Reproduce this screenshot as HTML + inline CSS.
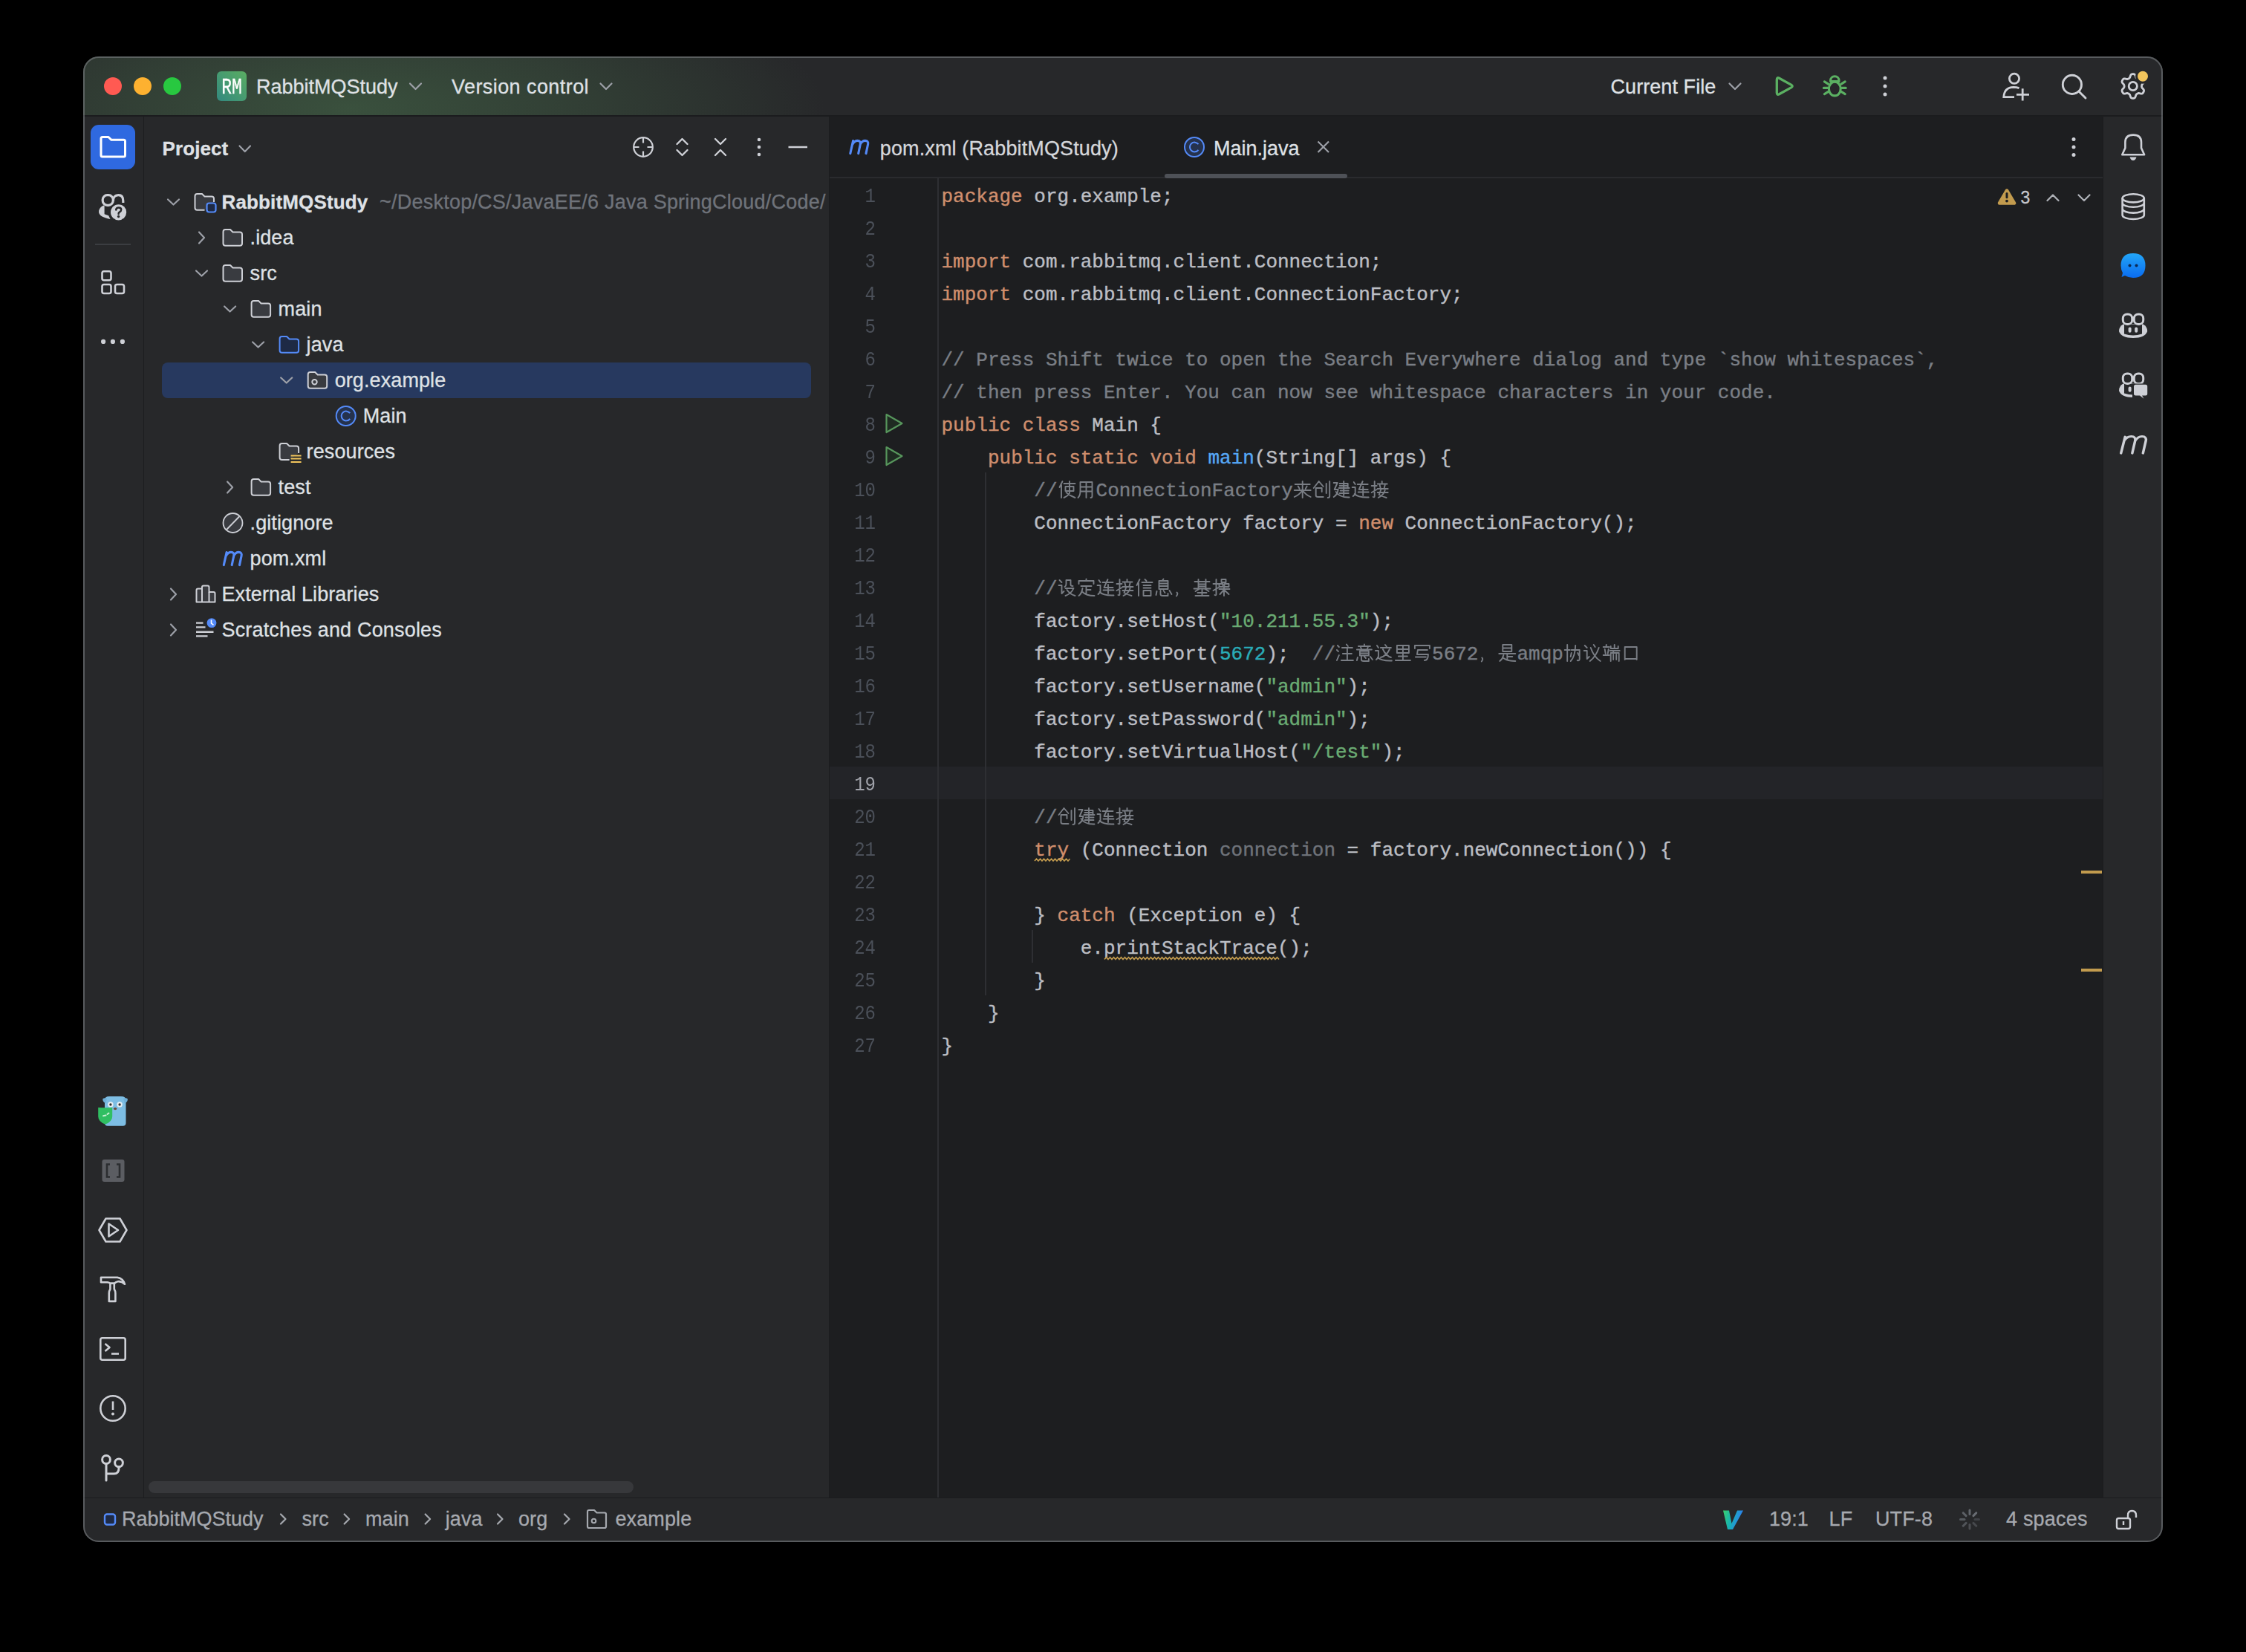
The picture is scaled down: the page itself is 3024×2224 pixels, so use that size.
<!DOCTYPE html>
<html><head><meta charset="utf-8">
<style>
html,body{margin:0;padding:0;background:#000;}
body{width:3024px;height:2224px;overflow:hidden;position:relative;font-family:"Liberation Sans",sans-serif;}
.a{position:absolute;}
.t{position:absolute;font-size:27px;line-height:26px;white-space:pre;color:#DFE1E5;-webkit-text-stroke:0.3px currentColor;}
#clip{position:absolute;left:0;top:0;width:3024px;height:2224px;clip-path:inset(76px 112px 148px 112px round 21px);background:#27282A;}
.code{position:absolute;left:1267.5px;top:242.5px;font-family:"Liberation Mono",monospace;font-size:26px;line-height:44px;white-space:pre;color:#BCBEC4;-webkit-text-stroke:0.4px currentColor;}
.ln{position:absolute;left:1080px;width:99px;text-align:right;font-family:"Liberation Mono",monospace;font-size:24px;line-height:44px;transform:scaleY(1.17);transform-origin:0 28.4px;}
.kw,.kwu{color:#CF8E6D}.str{color:#6AAB73}.num{color:#2AACB8}.cm{color:#7A7E85}.fn{color:#56A8F5}.un{color:#6F737A}
.cj{display:inline-block;width:26px;height:0;position:relative;}
svg{position:absolute;overflow:visible;}
.chev{fill:none;stroke:#9DA0A8;stroke-width:2.2;stroke-linecap:round;stroke-linejoin:round}
</style></head>
<body>
<div id="clip">
<div class="a" style="left:112px;top:76px;width:2800px;height:80px;background:#27282A;"></div>
<div class="a" style="left:112px;top:76px;width:1500px;height:80px;background:radial-gradient(ellipse 640px 190px at 360px 70px, rgba(80,128,84,0.46), rgba(80,128,84,0.25) 50%, rgba(80,128,84,0) 100%);"></div>
<div class="a" style="left:112px;top:155px;width:2800px;height:2px;background:#1B1C1E;"></div>
<div class="a" style="left:140px;top:104px;width:24px;height:24px;border-radius:50%;background:#FF5A52;"></div>
<div class="a" style="left:180px;top:104px;width:24px;height:24px;border-radius:50%;background:#FDB130;"></div>
<div class="a" style="left:220px;top:104px;width:24px;height:24px;border-radius:50%;background:#28C840;"></div>
<div class="a" style="left:292px;top:96px;width:40px;height:40px;border-radius:6px;background:linear-gradient(45deg,#33897F,#5AAD62);"></div>
<div class="a" style="left:295px;top:98px;width:34px;height:40px;font-family:'Liberation Mono',monospace;font-size:23px;line-height:40px;color:#fff;-webkit-text-stroke:0.25px #fff;text-align:center;transform:scaleY(1.26);">RM</div>
<div class="t" style="left:345.00px;top:103.94px;letter-spacing:0px;">RabbitMQStudy</div>
<div class="t" style="left:608.00px;top:103.94px;letter-spacing:0.43px;">Version control</div>
<div class="t" style="left:2168.50px;top:103.94px;letter-spacing:0.07px;">Current File</div>
<div class="a" style="left:193px;top:157px;width:1px;height:1860px;background:#1B1C1E;"></div>
<div class="a" style="left:122px;top:168px;width:60px;height:60px;border-radius:11px;background:#2F69E0;"></div>
<div class="a" style="left:128px;top:328px;width:48px;height:2px;background:#3B3D41;"></div>
<div class="t" style="left:218.50px;top:186.74px;letter-spacing:0.1px;font-size:26px;font-weight:bold;">Project</div>
<div class="a" style="left:218px;top:488px;width:874px;height:48px;border-radius:8px;background:#27395F;"></div>
<div class="t" style="left:298.50px;top:258.99px;letter-spacing:0.15px;font-size:26px;font-weight:bold;">RabbitMQStudy</div>
<div class="t" style="left:511.00px;top:258.64px;letter-spacing:0.23px;color:#6F737A;">~/Desktop/CS/JavaEE/6 Java SpringCloud/Code/</div>
<div class="t" style="left:336.54px;top:306.64px;letter-spacing:0.1px;">.idea</div>
<div class="t" style="left:336.54px;top:354.64px;letter-spacing:0.1px;">src</div>
<div class="t" style="left:374.58px;top:402.64px;letter-spacing:0.1px;">main</div>
<div class="t" style="left:412.62px;top:450.64px;letter-spacing:0.1px;">java</div>
<div class="t" style="left:450.66px;top:498.64px;letter-spacing:0.1px;">org.example</div>
<div class="t" style="left:488.70px;top:546.64px;letter-spacing:0.1px;">Main</div>
<div class="t" style="left:412.62px;top:594.64px;letter-spacing:0.1px;">resources</div>
<div class="t" style="left:374.58px;top:642.64px;letter-spacing:0.1px;">test</div>
<div class="t" style="left:336.54px;top:690.64px;letter-spacing:0.1px;">.gitignore</div>
<div class="t" style="left:336.54px;top:738.64px;letter-spacing:0.1px;">pom.xml</div>
<div class="t" style="left:298.50px;top:786.64px;letter-spacing:0.1px;">External Libraries</div>
<div class="t" style="left:298.50px;top:834.64px;letter-spacing:0.17px;">Scratches and Consoles</div>
<div class="a" style="left:200px;top:1994px;width:653px;height:16px;border-radius:8px;background:#37383B;"></div>
<div class="a" style="left:1116px;top:157px;width:1px;height:1860px;background:#1B1C1E;"></div>
<div class="a" style="left:1117px;top:157px;width:1715px;height:1860px;background:#1D1E20;"></div>
<div class="a" style="left:1117px;top:238px;width:1715px;height:2px;background:#2A2B2E;"></div>
<div class="a" style="left:1568px;top:234px;width:246px;height:6px;border-radius:3px;background:#4E5157;"></div>
<div class="t" style="left:1184.80px;top:186.64px;letter-spacing:0.13px;color:#D5D7DB;">pom.xml (RabbitMQStudy)</div>
<div class="t" style="left:1634.00px;top:186.64px;letter-spacing:0px;">Main.java</div>
<div class="a" style="left:1117px;top:1032px;width:1715px;height:44px;background:#232428;"></div>
<div class="a" style="left:1262px;top:240px;width:2px;height:1776px;background:#2E2F33;"></div>
<div class="a" style="left:1326px;top:636px;width:2px;height:704px;background:#2E2F33;"></div>
<div class="a" style="left:1389px;top:1252px;width:2px;height:44px;background:#2E2F33;"></div>
<div class="t" style="left:2720.50px;top:253.43px;letter-spacing:0px;font-size:23px;color:#C5C7CC;">3</div>
<div class="a" style="left:2802px;top:1172px;width:28px;height:4px;background:#C29B4E;"></div>
<div class="a" style="left:2802px;top:1304px;width:28px;height:4px;background:#C29B4E;"></div>
<div class="code"><span class="kw">package</span> org.example;

<span class="kw">import</span> com.rabbitmq.client.Connection;
<span class="kw">import</span> com.rabbitmq.client.ConnectionFactory;

<span class="cm">// Press Shift twice to open the Search Everywhere dialog and type `show whitespaces`,</span>
<span class="cm">// then press Enter. You can now see whitespace characters in your code.</span>
<span class="kw">public</span> <span class="kw">class</span> Main {
    <span class="kw">public</span> <span class="kw">static</span> <span class="kw">void</span> <span class="fn">main</span>(String[] args) {
        <span class="cm">//<span class="cj cjL"></span><span class="cj cjT"></span>ConnectionFactory<span class="cj cjT"></span><span class="cj cjL"></span><span class="cj cjL"></span><span class="cj cjL"></span><span class="cj cjL"></span></span>
        ConnectionFactory factory = <span class="kw">new</span> ConnectionFactory();

        <span class="cm">//<span class="cj cjL"></span><span class="cj cjT"></span><span class="cj cjL"></span><span class="cj cjL"></span><span class="cj cjL"></span><span class="cj cjT"></span><span class="cj cc"></span><span class="cj cjT"></span><span class="cj cjL"></span></span>
        factory.setHost(<span class="str">"10.211.55.3"</span>);
        factory.setPort(<span class="num">5672</span>);  <span class="cm">//<span class="cj cjL"></span><span class="cj cjT"></span><span class="cj cjL"></span><span class="cj cjT"></span><span class="cj cjT"></span>5672<span class="cj cc"></span><span class="cj cjT"></span>amqp<span class="cj cjL"></span><span class="cj cjL"></span><span class="cj cjL"></span><span class="cj cjT"></span></span>
        factory.setUsername(<span class="str">"admin"</span>);
        factory.setPassword(<span class="str">"admin"</span>);
        factory.setVirtualHost(<span class="str">"/test"</span>);

        <span class="cm">//<span class="cj cjL"></span><span class="cj cjL"></span><span class="cj cjL"></span><span class="cj cjL"></span></span>
        <span class="kwu">try</span> (Connection <span class="un">connection</span> = factory.newConnection()) {

        } <span class="kw">catch</span> (Exception e) {
            e.<span class="wu">printStackTrace</span>();
        }
    }
}</div>
<div class="ln" style="top:243.5px;color:#4B5059;">1</div>
<div class="ln" style="top:287.5px;color:#4B5059;">2</div>
<div class="ln" style="top:331.5px;color:#4B5059;">3</div>
<div class="ln" style="top:375.5px;color:#4B5059;">4</div>
<div class="ln" style="top:419.5px;color:#4B5059;">5</div>
<div class="ln" style="top:463.5px;color:#4B5059;">6</div>
<div class="ln" style="top:507.5px;color:#4B5059;">7</div>
<div class="ln" style="top:551.5px;color:#4B5059;">8</div>
<div class="ln" style="top:595.5px;color:#4B5059;">9</div>
<div class="ln" style="top:639.5px;color:#4B5059;">10</div>
<div class="ln" style="top:683.5px;color:#4B5059;">11</div>
<div class="ln" style="top:727.5px;color:#4B5059;">12</div>
<div class="ln" style="top:771.5px;color:#4B5059;">13</div>
<div class="ln" style="top:815.5px;color:#4B5059;">14</div>
<div class="ln" style="top:859.5px;color:#4B5059;">15</div>
<div class="ln" style="top:903.5px;color:#4B5059;">16</div>
<div class="ln" style="top:947.5px;color:#4B5059;">17</div>
<div class="ln" style="top:991.5px;color:#4B5059;">18</div>
<div class="ln" style="top:1035.5px;color:#A1A3AB;">19</div>
<div class="ln" style="top:1079.5px;color:#4B5059;">20</div>
<div class="ln" style="top:1123.5px;color:#4B5059;">21</div>
<div class="ln" style="top:1167.5px;color:#4B5059;">22</div>
<div class="ln" style="top:1211.5px;color:#4B5059;">23</div>
<div class="ln" style="top:1255.5px;color:#4B5059;">24</div>
<div class="ln" style="top:1299.5px;color:#4B5059;">25</div>
<div class="ln" style="top:1343.5px;color:#4B5059;">26</div>
<div class="ln" style="top:1387.5px;color:#4B5059;">27</div>
<div class="a" style="left:2831px;top:157px;width:1px;height:1860px;background:#1B1C1E;"></div>
<div class="a" style="left:112px;top:2016px;width:2800px;height:1px;background:#1B1C1E;"></div>
<div class="t" style="left:164.00px;top:2031.94px;letter-spacing:0px;color:#A6A9AF;">RabbitMQStudy</div>
<div class="t" style="left:406.50px;top:2031.94px;letter-spacing:0.1px;color:#A6A9AF;">src</div>
<div class="t" style="left:492.00px;top:2031.94px;letter-spacing:0.1px;color:#A6A9AF;">main</div>
<div class="t" style="left:599.70px;top:2031.94px;letter-spacing:0.1px;color:#A6A9AF;">java</div>
<div class="t" style="left:698.00px;top:2031.94px;letter-spacing:0.1px;color:#A6A9AF;">org</div>
<div class="t" style="left:828.50px;top:2031.94px;letter-spacing:0.1px;color:#A6A9AF;">example</div>
<div class="t" style="left:2382.00px;top:2031.94px;letter-spacing:0.1px;color:#A6A9AF;">19:1</div>
<div class="t" style="left:2462.60px;top:2031.94px;letter-spacing:0.1px;color:#A6A9AF;">LF</div>
<div class="t" style="left:2525.00px;top:2031.94px;letter-spacing:0.1px;color:#A6A9AF;">UTF-8</div>
<div class="t" style="left:2701.00px;top:2031.94px;letter-spacing:0.2px;color:#A6A9AF;">4 spaces</div>
<svg class="a" style="left:0;top:0;" width="3024" height="2224" viewBox="0 0 3024 2224">
<defs>
<g id="i-folder"><path d="M1 4Q1 1 4 1H10.5L14 4.5H23.5Q26.5 4.5 26.5 7.5V19.7Q26.5 22.7 23.5 22.7H4Q1 22.7 1 19.7Z" fill="#393B40" stroke="#CED0D6" stroke-width="2" stroke-linejoin="round"/></g>
<g id="i-jfolder"><path d="M1 4Q1 1 4 1H10.5L14 4.5H23.5Q26.5 4.5 26.5 7.5V19.7Q26.5 22.7 23.5 22.7H4Q1 22.7 1 19.7Z" fill="#1E2A45" stroke="#548AF7" stroke-width="2" stroke-linejoin="round"/></g>
<g id="i-pkg"><path d="M1 4Q1 1 4 1H10.5L14 4.5H23.5Q26.5 4.5 26.5 7.5V19.7Q26.5 22.7 23.5 22.7H4Q1 22.7 1 19.7Z" fill="#393B40" stroke="#CED0D6" stroke-width="2" stroke-linejoin="round"/><circle cx="9.8" cy="14.2" r="3.2" fill="none" stroke="#CED0D6" stroke-width="2"/></g>
<g id="i-proj"><path d="M14 22.7H4Q1 22.7 1 19.7V4Q1 1 4 1H10.5L14 4.5H23.5Q26.5 4.5 26.5 7.5V12" fill="#393B40" stroke="#CED0D6" stroke-width="2" stroke-linejoin="round"/><rect x="17" y="13.5" width="12" height="12" rx="3" fill="#1E2A45" stroke="#548AF7" stroke-width="2.2"/></g>
<g id="i-class"><circle cx="14" cy="12" r="13" fill="#25324D" stroke="#548AF7" stroke-width="2"/><path d="M19.5 8.2A6.4 6.4 0 1 0 19.5 15.8" fill="none" stroke="#548AF7" stroke-width="2"/></g>
<g id="i-res"><path d="M14 23H4Q1 23 1 20V4Q1 1 4 1H10.5L14 4.5H23.5Q26.5 4.5 26.5 7.5V14" fill="#393B40" stroke="#CED0D6" stroke-width="2" stroke-linejoin="round"/><path d="M16 17.5H30M16 21.5H30M16 26H30" stroke="#F2C55C" stroke-width="2.2"/></g>
<g id="i-ignore"><circle cx="14" cy="12" r="13" fill="#393B40" stroke="#CED0D6" stroke-width="1.8"/><path d="M5.5 21L23 3" stroke="#CED0D6" stroke-width="1.8"/></g>
<g id="i-maven"><path d="M1.8 20.6L5.6 3.6M4.9 8.2C6.6 5 9 3.4 11.6 3.4C14.6 3.4 15.9 5.2 15.3 8.2L12.7 20.6M15.2 8.4C16.9 5 19.3 3.4 21.9 3.4C24.9 3.4 26.2 5.2 25.6 8.2L23 20.6" fill="none" stroke="#548AF7" stroke-width="3.1" stroke-linecap="round"/></g>
<g id="i-libs" transform="translate(2 0)"><path d="M1 22.5V6.5Q1 4.5 3 4.5H8.5V2.5Q8.5 0.5 10.5 0.5H16Q18 0.5 18 2.5V9H24Q26 9 26 11V22.5Z" fill="#393B40" stroke="#CED0D6" stroke-width="2" stroke-linejoin="round"/><path d="M8.5 5V22M18 9V22" stroke="#CED0D6" stroke-width="2"/></g>
<g id="i-scratch"><path d="M2.5 2.6H12M2.5 8.4H15M2.5 14.7H26M2.5 20.4H18" stroke="#CED0D6" stroke-width="2.4"/><circle cx="23.5" cy="2.6" r="7.2" fill="#548AF7" stroke="#27282A" stroke-width="1.5"/><path d="M23 -1.5V3L26 5.4" fill="none" stroke="#fff" stroke-width="1.6"/></g>
</defs>
<path d="M552 112.5L559.5 120L567 112.5" class="chev" style="stroke:#9DA0A8"/>
<path d="M808.5 112.5L816.0 120L823.5 112.5" class="chev" style="stroke:#9DA0A8"/>
<path d="M2328.5 112.5L2336.0 120L2343.5 112.5" class="chev" style="stroke:#9DA0A8"/>
<path d="M2392.3 107.2Q2392.3 103.6 2395.5 105.3L2411.6 114.1Q2414.8 116 2411.6 117.9L2395.5 126.7Q2392.3 128.4 2392.3 124.8Z" fill="none" stroke="#5BB062" stroke-width="3.3" stroke-linejoin="round"/>
<g fill="none" stroke="#5BB062" stroke-width="3.1" stroke-linecap="round"><ellipse cx="2470.3" cy="119.6" rx="7.9" ry="9.3"/><path d="M2464.6 109.6V108.4A5.7 5.7 0 0 1 2476 108.4V109.6Z" stroke-linejoin="round"/><path d="M2456.4 109.9L2461.6 113.1M2455.4 118.4H2461.6M2456.4 126.6L2461.6 123.4M2484.2 109.9L2479 113.1M2485.2 118.4H2479M2484.2 126.6L2479 123.4"/></g>
<circle cx="2538" cy="105.1" r="2.5" fill="#CED0D6"/>
<circle cx="2538" cy="116.1" r="2.5" fill="#CED0D6"/>
<circle cx="2538" cy="127" r="2.5" fill="#CED0D6"/>
<g fill="none" stroke="#CED0D6" stroke-width="2.8" stroke-linecap="butt"><circle cx="2712" cy="105.8" r="6.6"/><path d="M2718.5 118.6Q2715 117.3 2711 117.3Q2698.5 117.6 2697.8 130.6H2712"/><path d="M2723.2 119.2V135.6M2715 127.4H2732"/></g>
<g fill="none" stroke="#CED0D6" stroke-width="2.9" stroke-linecap="round"><circle cx="2789.9" cy="113.9" r="12.6"/><path d="M2799.2 123.2L2808 132"/></g>
<mask id="gm"><rect x="2840" y="85" width="70" height="70" fill="#fff"/><circle cx="2885" cy="102.8" r="10" fill="#000"/></mask>
<g mask="url(#gm)" fill="none" stroke="#CED0D6" stroke-width="2.8" stroke-linejoin="round"><path d="M2871.8 99.7L2872.5 99.7L2873.2 99.9L2873.9 100.1L2874.5 100.6L2875.0 101.4L2875.4 102.5L2875.7 103.6L2876.0 104.4L2876.4 104.9L2876.8 105.3L2877.2 105.6L2877.7 105.9L2878.1 106.1L2878.6 106.3L2879.1 106.5L2879.7 106.5L2880.6 106.4L2881.7 106.1L2882.8 105.9L2883.8 105.9L2884.5 106.2L2885.1 106.7L2885.5 107.3L2885.9 107.8L2886.2 108.5L2886.5 109.2L2886.6 109.9L2886.5 110.6L2886.1 111.5L2885.3 112.4L2884.5 113.2L2884.0 113.9L2883.7 114.4L2883.6 115.0L2883.5 115.5L2883.5 116.0L2883.5 116.5L2883.6 117.0L2883.7 117.6L2884.0 118.1L2884.5 118.8L2885.3 119.6L2886.1 120.5L2886.5 121.4L2886.6 122.1L2886.5 122.8L2886.2 123.5L2885.9 124.1L2885.5 124.7L2885.1 125.3L2884.5 125.8L2883.8 126.1L2882.8 126.1L2881.7 125.9L2880.6 125.6L2879.7 125.5L2879.1 125.5L2878.6 125.7L2878.1 125.9L2877.7 126.1L2877.2 126.4L2876.8 126.7L2876.4 127.1L2876.0 127.6L2875.7 128.4L2875.4 129.5L2875.0 130.6L2874.5 131.4L2873.9 131.9L2873.2 132.1L2872.5 132.3L2871.8 132.3L2871.1 132.3L2870.4 132.1L2869.7 131.9L2869.1 131.4L2868.6 130.6L2868.2 129.5L2867.9 128.4L2867.6 127.6L2867.2 127.1L2866.8 126.7L2866.4 126.4L2866.0 126.1L2865.5 125.9L2865.0 125.7L2864.5 125.5L2863.9 125.5L2863.0 125.6L2861.9 125.9L2860.8 126.1L2859.8 126.1L2859.1 125.8L2858.5 125.3L2858.1 124.7L2857.7 124.2L2857.4 123.5L2857.1 122.8L2857.0 122.1L2857.1 121.4L2857.5 120.5L2858.3 119.6L2859.1 118.8L2859.6 118.1L2859.9 117.6L2860.0 117.0L2860.1 116.5L2860.1 116.0L2860.1 115.5L2860.0 115.0L2859.9 114.4L2859.6 113.9L2859.1 113.2L2858.3 112.4L2857.5 111.5L2857.1 110.6L2857.0 109.9L2857.1 109.2L2857.4 108.5L2857.7 107.9L2858.1 107.3L2858.5 106.7L2859.1 106.2L2859.8 105.9L2860.8 105.9L2861.9 106.1L2863.0 106.4L2863.9 106.5L2864.5 106.5L2865.0 106.3L2865.5 106.1L2866.0 105.9L2866.4 105.6L2866.8 105.3L2867.2 104.9L2867.6 104.4L2867.9 103.6L2868.2 102.5L2868.6 101.4L2869.1 100.6L2869.7 100.1L2870.4 99.9L2871.1 99.7Z"/><circle cx="2871.8" cy="116" r="5.6"/></g>
<circle cx="2885" cy="102.8" r="7" fill="#F2C55C"/>
<path d="M136 186.5Q136 184.5 138 184.5H146L150 188.3H166.5Q168.5 188.3 168.5 190.3V209Q168.5 211 166.5 211H138Q136 211 136 209Z" fill="none" stroke="#fff" stroke-width="3" stroke-linejoin="round"/>
<g fill="none" stroke="#CED0D6" stroke-width="3.2"><rect x="138.2" y="262.7" width="14.1" height="13.6" rx="6.2"/><path d="M152.4 271Q152.2 262.7 159.5 262.7Q165.8 262.7 165.8 270.5V273"/></g><path d="M139.2 276.5Q133 279.5 133 285.5Q133.5 292 148.5 295L146.2 290.3L140.6 288.2V276.8Z" fill="#CED0D6"/><circle cx="159.6" cy="285.8" r="12.2" fill="#27282A"/><circle cx="159.6" cy="285.8" r="10.6" fill="#CED0D6"/><path d="M156.2 282.5Q156.6 279.4 159.8 279.4Q163.2 279.4 163.2 282.3Q163.2 284.3 160.8 285.6Q159.6 286.3 159.6 287.9" fill="none" stroke="#27282A" stroke-width="2.5" stroke-linecap="round"/><circle cx="159.6" cy="291.5" r="1.7" fill="#27282A"/>
<g fill="none" stroke="#CED0D6" stroke-width="2.6"><rect x="137.5" y="365.2" width="12" height="12" rx="2.5"/><rect x="137.5" y="383" width="12" height="12" rx="2.5"/><rect x="155" y="383" width="12" height="12" rx="2.5"/></g>
<circle cx="139.1" cy="459.9" r="3.1" fill="#CED0D6"/>
<circle cx="151.9" cy="459.9" r="3.1" fill="#CED0D6"/>
<circle cx="164.9" cy="459.9" r="3.1" fill="#CED0D6"/>
<g><path d="M141 1481Q141 1476 147 1476H163Q169.5 1476 169.5 1481V1512Q169.5 1515.7 165.5 1515.7H145Q141 1515.7 141 1512Z" fill="#7DBDE3"/><path d="M138.2 1479.5Q140 1477.5 144 1478.5L142.5 1485.3Q138.5 1484 138.2 1479.5ZM172 1479.5Q170.2 1477.5 166.2 1478.5L167.7 1485.3Q171.7 1484 172 1479.5Z" fill="#6FB0D8"/><circle cx="148.9" cy="1486.9" r="3.7" fill="#E8EEF2"/><circle cx="161.1" cy="1486.9" r="3.7" fill="#E8EEF2"/><circle cx="148.9" cy="1487" r="1.7" fill="#333"/><circle cx="161.1" cy="1487" r="1.7" fill="#333"/><ellipse cx="155.1" cy="1492.6" rx="2.2" ry="1.6" fill="#6B4A3A"/><path d="M132.2 1491V1503Q132.2 1510 141.7 1513.6Q151.2 1510 151.2 1503V1491Q141.7 1491.5 132.2 1491Z" fill="#30BE62"/><path d="M139 1502.2L142.5 1501.6M144.5 1500L146.5 1498.6" stroke="#C8F0D4" stroke-width="2" stroke-linecap="round"/></g>
<g><rect x="137.5" y="1561" width="30" height="30" rx="3" fill="#5B5D62"/><path d="M148 1567.5H144V1584.5H148M157 1567.5H161V1584.5H157" fill="none" stroke="#2B2D30" stroke-width="2.6"/></g>
<g fill="none" stroke="#CED0D6" stroke-width="2.6" stroke-linejoin="round"><path d="M133.5 1656L142.5 1640.5H161.5L170.5 1656L161.5 1671.5H142.5Z"/><path d="M146.5 1647.5L159 1656L146.5 1664.5Z"/></g>
<g fill="none" stroke="#CED0D6" stroke-width="2.6" stroke-linejoin="round"><path d="M136 1719.8H158Q165.5 1721 168 1728.8Q163.5 1724.5 158.5 1725.2Q156 1725.6 154.2 1727.6H148.2Q146.5 1726.2 144.5 1726.2H136Z"/><path d="M148.4 1728.2V1735.5Q146.8 1738 146.8 1741V1751.9H155.4V1741Q155.4 1738 153.8 1735.5V1728.2"/></g>
<g fill="none" stroke="#CED0D6" stroke-width="2.6"><rect x="135.3" y="1801.3" width="33.4" height="29.4" rx="2.5"/><path d="M141.5 1809L147.5 1814L141.5 1819" stroke-linejoin="round"/><path d="M150 1822.5H160"/></g>
<g fill="none" stroke="#CED0D6" stroke-width="2.6"><circle cx="152" cy="1896" r="16.7"/><path d="M152 1886.5V1898"/></g><circle cx="152" cy="1903.5" r="2" fill="#CED0D6"/>
<g fill="none" stroke="#CED0D6" stroke-width="3" stroke-linecap="round"><circle cx="143" cy="1965" r="5.4"/><circle cx="160" cy="1969.3" r="5.4"/><path d="M143 1970.4V1993M143 1984H153.5Q160 1984 160 1976.5V1974.7"/></g>
<path d="M322.5 196.5L329.75 204L337 196.5" class="chev" style="stroke:#9DA0A8"/>
<g fill="none" stroke="#CED0D6" stroke-width="2.2"><circle cx="866" cy="198" r="12.8"/><path d="M866 185.2V192.5M866 203.5V210.8M853.2 198H860.5M871.5 198H878.8"/></g>
<g fill="none" stroke="#CED0D6" stroke-width="2.4" stroke-linecap="round" stroke-linejoin="round"><path d="M911.5 194L918.5 187L925.5 194M911.5 202L918.5 209L925.5 202"/><path d="M963 187L970 194L977 187M963 209L970 202L977 209"/></g>
<circle cx="1022" cy="188" r="2.3" fill="#CED0D6"/>
<circle cx="1022" cy="198" r="2.3" fill="#CED0D6"/>
<circle cx="1022" cy="208" r="2.3" fill="#CED0D6"/>
<path d="M1061.5 198H1087" stroke="#CED0D6" stroke-width="2.4"/>
<path d="M226.0 268.5L233.5 275.5L241.0 268.5" class="chev"/>
<use href="#i-proj" x="261.5" y="260.0"/>
<path d="M268.0 312.5L275.0 320L268.0 327.5" class="chev"/>
<use href="#i-folder" x="299.5" y="308.0"/>
<path d="M264.0 364.5L271.5 371.5L279.0 364.5" class="chev"/>
<use href="#i-folder" x="299.5" y="356.0"/>
<path d="M302.1 412.5L309.6 419.5L317.1 412.5" class="chev"/>
<use href="#i-folder" x="337.6" y="404.0"/>
<path d="M340.1 460.5L347.6 467.5L355.1 460.5" class="chev"/>
<use href="#i-jfolder" x="375.6" y="452.0"/>
<path d="M378.2 508.5L385.7 515.5L393.2 508.5" class="chev"/>
<use href="#i-pkg" x="413.7" y="500.0"/>
<use href="#i-class" x="451.7" y="548.0"/>
<use href="#i-res" x="375.6" y="596.0"/>
<path d="M306.1 648.5L313.1 656L306.1 663.5" class="chev"/>
<use href="#i-folder" x="337.6" y="644.0"/>
<use href="#i-ignore" x="299.5" y="692.0"/>
<use href="#i-maven" x="299.5" y="740.0"/>
<path d="M230.0 792.5L237.0 800L230.0 807.5" class="chev"/>
<use href="#i-libs" x="261.5" y="788.0"/>
<path d="M230.0 840.5L237.0 848L230.0 855.5" class="chev"/>
<use href="#i-scratch" x="261.5" y="836.0"/>
<use href="#i-maven" x="1143" y="186"/>
<use href="#i-class" x="1594" y="186"/>
<path d="M1774.5 190.5L1789 205M1789 190.5L1774.5 205" stroke="#9DA0A8" stroke-width="2.2"/>
<circle cx="2792" cy="187.5" r="2.5" fill="#CED0D6"/>
<circle cx="2792" cy="198" r="2.5" fill="#CED0D6"/>
<circle cx="2792" cy="208.5" r="2.5" fill="#CED0D6"/>
<path d="M2702 256.5L2712 273.5H2692Z" fill="#C29B4E" stroke="#C29B4E" stroke-width="4.5" stroke-linejoin="round"/><path d="M2702 260.5V265.8" stroke="#1D1E20" stroke-width="3" stroke-linecap="round"/><circle cx="2702" cy="270.6" r="1.9" fill="#1D1E20"/>
<path d="M2756.5 270L2764 262.5L2771.5 270M2798.5 262.5L2806 270L2813.5 262.5" class="chev" style="stroke:#AEB1B7"/>
<path transform="translate(1424.5 647)" d="M6 1L2 9M4.5 6V23M8 4H23M10 8H21V14H10ZM15.5 1V17Q13 21 8 23M11 16Q17 21 23 23" fill="none" stroke="#7A7E85" stroke-width="1.9" stroke-linecap="round" stroke-linejoin="round"/>
<path transform="translate(1450.5 647)" d="M4 2H20V21Q20 23 18 23M4 2V14Q4 20 1 23M4 8.5H20M4 14.5H20M12 2V23" fill="none" stroke="#7A7E85" stroke-width="1.9" stroke-linecap="round" stroke-linejoin="round"/>
<path transform="translate(1741.7 647)" d="M2 5H22M12 1V23M6 7.5L8 11M18 7.5L16 11M1 13H23M12 13Q8 19 1 22M12 13Q16 19 23 22" fill="none" stroke="#7A7E85" stroke-width="1.9" stroke-linecap="round" stroke-linejoin="round"/>
<path transform="translate(1767.7 647)" d="M8 1L1 10M8 1L14 8M4 10H12V15M4 10V20Q4 22 7 22H14M18 4V17M22.5 1V21Q22.5 23 20 23" fill="none" stroke="#7A7E85" stroke-width="1.9" stroke-linecap="round" stroke-linejoin="round"/>
<path transform="translate(1793.7 647)" d="M2 3H7L3 12H8Q7 19 2 22M5 15Q10 23 23 22.5M10 4H21V10M9 10H23M10 7H20M11 13.5H22M10 17H22M15.5 1V20" fill="none" stroke="#7A7E85" stroke-width="1.9" stroke-linecap="round" stroke-linejoin="round"/>
<path transform="translate(1819.7 647)" d="M3 2L5 5M1 9H5V18L2 21M4 18Q9 23 23 22.5M8 5H22M15 1L10 12H22M15.5 8V20M9 15.5H23" fill="none" stroke="#7A7E85" stroke-width="1.9" stroke-linecap="round" stroke-linejoin="round"/>
<path transform="translate(1845.7 647)" d="M1 7H8M5 1V21Q5 23 3 22M1 16L8 12M15 1V4M9 4.5H22M12 6L13 10M19 6L18 10M9 11H23M14 11L11 19Q17 22 21 23M19 13Q17 20 10 23M9 16H23" fill="none" stroke="#7A7E85" stroke-width="1.9" stroke-linecap="round" stroke-linejoin="round"/>
<path transform="translate(1424.5 779)" d="M2 2L5 5M1 9H5V20L8 17M11 2V7Q11 10 9 11M11 2H17V8Q17 10 20 10M10 13H21Q18 20 10 23M12 15Q16 21 23 23" fill="none" stroke="#7A7E85" stroke-width="1.9" stroke-linecap="round" stroke-linejoin="round"/>
<path transform="translate(1450.5 779)" d="M12 0.5V3M2 7V3H22V7M5 10H19M12 10V21M12 15H18M7 13Q6 20 2 23M7 18Q12 23 23 23" fill="none" stroke="#7A7E85" stroke-width="1.9" stroke-linecap="round" stroke-linejoin="round"/>
<path transform="translate(1476.5 779)" d="M3 2L5 5M1 9H5V18L2 21M4 18Q9 23 23 22.5M8 5H22M15 1L10 12H22M15.5 8V20M9 15.5H23" fill="none" stroke="#7A7E85" stroke-width="1.9" stroke-linecap="round" stroke-linejoin="round"/>
<path transform="translate(1502.5 779)" d="M1 7H8M5 1V21Q5 23 3 22M1 16L8 12M15 1V4M9 4.5H22M12 6L13 10M19 6L18 10M9 11H23M14 11L11 19Q17 22 21 23M19 13Q17 20 10 23M9 16H23" fill="none" stroke="#7A7E85" stroke-width="1.9" stroke-linecap="round" stroke-linejoin="round"/>
<path transform="translate(1528.5 779)" d="M6 1L2 9M4.5 6V23M13 1L15 3M9 5H23M11 9H21M11 12.5H21M11 16H21V23H11Z" fill="none" stroke="#7A7E85" stroke-width="1.9" stroke-linecap="round" stroke-linejoin="round"/>
<path transform="translate(1554.5 779)" d="M12 0.5L10 3M6 3H18V14H6ZM6 6.5H18M6 10H18M3 17L2 22M8 16V21Q8 23 11 23H18V20M12 16L14 19M20 16L23 21" fill="none" stroke="#7A7E85" stroke-width="1.9" stroke-linecap="round" stroke-linejoin="round"/>
<path transform="translate(1580.5 779)" d="M4 18.5Q6 20 3.5 23.5" fill="none" stroke="#7A7E85" stroke-width="1.9" stroke-linecap="round" stroke-linejoin="round"/>
<path transform="translate(1606.5 779)" d="M2 4H22M7 1V13M17 1V13M7 7.5H17M7 10.5H17M1 13.5H23M8 14L3 17M16 14L21 17M6 19H18M12 15V23M3 23H21" fill="none" stroke="#7A7E85" stroke-width="1.9" stroke-linecap="round" stroke-linejoin="round"/>
<path transform="translate(1632.5 779)" d="M1 7H8M5 1V21Q5 23 3 22M1 16L8 12M12 1H18V5H12ZM9 7H14V11H9ZM16 7H22V11H16ZM9 14H23M15.5 12V23M15.5 15L10 21M15.5 15L22 21" fill="none" stroke="#7A7E85" stroke-width="1.9" stroke-linecap="round" stroke-linejoin="round"/>
<path transform="translate(1798.9 867)" d="M2 2L4 4M1 8L3 10M1 22L4 15M14 0.5L16 3M8 5H22M15 5V22M9 13H21M7 22H23" fill="none" stroke="#7A7E85" stroke-width="1.9" stroke-linecap="round" stroke-linejoin="round"/>
<path transform="translate(1824.9 867)" d="M12 0.5V2.5M4 3H20M7 4L8 6.5M17 4L16 6.5M2 7.5H22M6 9.5H18V15.5H6ZM6 12.5H18M3 18L2 22M8 17V21Q8 23 11 23H18V20M12 17L14 19M20 17L23 21" fill="none" stroke="#7A7E85" stroke-width="1.9" stroke-linecap="round" stroke-linejoin="round"/>
<path transform="translate(1850.9 867)" d="M3 2L5 5M1 9H5V18L2 21M4 18Q9 23 23 22.5M14 1L16 3.5M8 5H22M11 7Q15 16 22 18M20 7Q16 16 8 18" fill="none" stroke="#7A7E85" stroke-width="1.9" stroke-linecap="round" stroke-linejoin="round"/>
<path transform="translate(1876.9 867)" d="M4 2H20V12H4ZM4 7H20M12 2V21M6 16.5H18M2 22H22" fill="none" stroke="#7A7E85" stroke-width="1.9" stroke-linecap="round" stroke-linejoin="round"/>
<path transform="translate(1902.9 867)" d="M2 6V2H22V6M6 8H19M6 8L5 14H20Q20 22 15 22M3 17.5H17" fill="none" stroke="#7A7E85" stroke-width="1.9" stroke-linecap="round" stroke-linejoin="round"/>
<path transform="translate(1991.3 867)" d="M4 18.5Q6 20 3.5 23.5" fill="none" stroke="#7A7E85" stroke-width="1.9" stroke-linecap="round" stroke-linejoin="round"/>
<path transform="translate(2017.3 867)" d="M6 1H18V10H6ZM6 5.5H18M1 13H23M12 13V21M12 17H19M7 15Q6 20 2 23M7 19Q12 23 23 23" fill="none" stroke="#7A7E85" stroke-width="1.9" stroke-linecap="round" stroke-linejoin="round"/>
<path transform="translate(2105.7 867)" d="M1 8H8M4.5 1V23M10 8H21V20Q21 23 18 22M15.5 2Q15 17 9 23M10 12L9 17M18.5 12L20 15" fill="none" stroke="#7A7E85" stroke-width="1.9" stroke-linecap="round" stroke-linejoin="round"/>
<path transform="translate(2131.7 867)" d="M2 2L5 5M1 9H5V20L8 17M14 1L16 4M10 5Q14 17 23 23M21 5Q17 17 9 23" fill="none" stroke="#7A7E85" stroke-width="1.9" stroke-linecap="round" stroke-linejoin="round"/>
<path transform="translate(2157.7 867)" d="M5 1V3M1 4H9M3 7L4 13M8 7L7 13M1 15H9M16 1V6M11 3V6H21V3M10 9H23M15 9L14 12M11 12H22V23M11 12V23M14.5 14V21M18.5 14V21" fill="none" stroke="#7A7E85" stroke-width="1.9" stroke-linecap="round" stroke-linejoin="round"/>
<path transform="translate(2183.7 867)" d="M4 4V21M4 4H20V21M4 20H20" fill="none" stroke="#7A7E85" stroke-width="1.9" stroke-linecap="round" stroke-linejoin="round"/>
<path transform="translate(1424.5 1087)" d="M8 1L1 10M8 1L14 8M4 10H12V15M4 10V20Q4 22 7 22H14M18 4V17M22.5 1V21Q22.5 23 20 23" fill="none" stroke="#7A7E85" stroke-width="1.9" stroke-linecap="round" stroke-linejoin="round"/>
<path transform="translate(1450.5 1087)" d="M2 3H7L3 12H8Q7 19 2 22M5 15Q10 23 23 22.5M10 4H21V10M9 10H23M10 7H20M11 13.5H22M10 17H22M15.5 1V20" fill="none" stroke="#7A7E85" stroke-width="1.9" stroke-linecap="round" stroke-linejoin="round"/>
<path transform="translate(1476.5 1087)" d="M3 2L5 5M1 9H5V18L2 21M4 18Q9 23 23 22.5M8 5H22M15 1L10 12H22M15.5 8V20M9 15.5H23" fill="none" stroke="#7A7E85" stroke-width="1.9" stroke-linecap="round" stroke-linejoin="round"/>
<path transform="translate(1502.5 1087)" d="M1 7H8M5 1V21Q5 23 3 22M1 16L8 12M15 1V4M9 4.5H22M12 6L13 10M19 6L18 10M9 11H23M14 11L11 19Q17 22 21 23M19 13Q17 20 10 23M9 16H23" fill="none" stroke="#7A7E85" stroke-width="1.9" stroke-linecap="round" stroke-linejoin="round"/>
<path d="M1193.5 558L1214.5 570L1193.5 582Z" fill="#1F2B22" stroke="#57965C" stroke-width="2.2" stroke-linejoin="round"/>
<path d="M1193.5 602L1214.5 614L1193.5 626Z" fill="#1F2B22" stroke="#57965C" stroke-width="2.2" stroke-linejoin="round"/>
<path d="M1393 1159L1395.5 1156.2L1398.0 1159L1400.5 1156.2L1403.0 1159L1405.5 1156.2L1408.0 1159L1410.5 1156.2L1413.0 1159L1415.5 1156.2L1418.0 1159L1420.5 1156.2L1423.0 1159L1425.5 1156.2L1428.0 1159L1430.5 1156.2L1433.0 1159L1435.5 1156.2L1438.0 1159L1440.5 1156.2" fill="none" stroke="#C29B4E" stroke-width="1.7"/>
<path d="M1487 1291.5L1489.5 1288.7L1492.0 1291.5L1494.5 1288.7L1497.0 1291.5L1499.5 1288.7L1502.0 1291.5L1504.5 1288.7L1507.0 1291.5L1509.5 1288.7L1512.0 1291.5L1514.5 1288.7L1517.0 1291.5L1519.5 1288.7L1522.0 1291.5L1524.5 1288.7L1527.0 1291.5L1529.5 1288.7L1532.0 1291.5L1534.5 1288.7L1537.0 1291.5L1539.5 1288.7L1542.0 1291.5L1544.5 1288.7L1547.0 1291.5L1549.5 1288.7L1552.0 1291.5L1554.5 1288.7L1557.0 1291.5L1559.5 1288.7L1562.0 1291.5L1564.5 1288.7L1567.0 1291.5L1569.5 1288.7L1572.0 1291.5L1574.5 1288.7L1577.0 1291.5L1579.5 1288.7L1582.0 1291.5L1584.5 1288.7L1587.0 1291.5L1589.5 1288.7L1592.0 1291.5L1594.5 1288.7L1597.0 1291.5L1599.5 1288.7L1602.0 1291.5L1604.5 1288.7L1607.0 1291.5L1609.5 1288.7L1612.0 1291.5L1614.5 1288.7L1617.0 1291.5L1619.5 1288.7L1622.0 1291.5L1624.5 1288.7L1627.0 1291.5L1629.5 1288.7L1632.0 1291.5L1634.5 1288.7L1637.0 1291.5L1639.5 1288.7L1642.0 1291.5L1644.5 1288.7L1647.0 1291.5L1649.5 1288.7L1652.0 1291.5L1654.5 1288.7L1657.0 1291.5L1659.5 1288.7L1662.0 1291.5L1664.5 1288.7L1667.0 1291.5L1669.5 1288.7L1672.0 1291.5L1674.5 1288.7L1677.0 1291.5L1679.5 1288.7L1682.0 1291.5L1684.5 1288.7L1687.0 1291.5L1689.5 1288.7L1692.0 1291.5L1694.5 1288.7L1697.0 1291.5L1699.5 1288.7L1702.0 1291.5L1704.5 1288.7L1707.0 1291.5L1709.5 1288.7L1712.0 1291.5L1714.5 1288.7L1717.0 1291.5L1719.5 1288.7L1722.0 1291.5" fill="none" stroke="#C29B4E" stroke-width="1.7"/>
<g fill="none" stroke="#CED0D6" stroke-width="2.6" stroke-linejoin="round"><path d="M2857.3 208.3H2887.1L2883 199.2V191.5Q2883 181.6 2872.2 181.6Q2861.4 181.6 2861.4 191.5V199.2Z"/></g><path d="M2867.5 211.5H2876.5Q2875 216 2872 216Q2869 216 2867.5 211.5Z" fill="#CED0D6"/>
<g fill="none" stroke="#CED0D6" stroke-width="2.6"><ellipse cx="2872.2" cy="266.8" rx="14.6" ry="5.6"/><path d="M2857.6 266.8V289.4A14.6 5.6 0 0 0 2886.8 289.4V266.8M2857.6 273.2A14.6 5.6 0 0 0 2886.8 273.2M2857.6 281A14.6 5.6 0 0 0 2886.8 281"/></g>
<defs><linearGradient id="chatg" x1="0" y1="0" x2="0" y2="1"><stop offset="0" stop-color="#23A6F8"/><stop offset="1" stop-color="#0A6CF0"/></linearGradient></defs><path d="M2872 341Q2888.5 341 2888.5 357.5Q2888.5 374 2872 374Q2866 374 2861 371L2856.5 373L2858 367.5Q2855.5 363 2855.5 357.5Q2855.5 341 2872 341Z" fill="url(#chatg)"/><circle cx="2867.5" cy="357.5" r="2" fill="#0B2A55"/><circle cx="2876.5" cy="357.5" r="2" fill="#0B2A55"/>
<g transform="translate(0 0)"><path d="M2853 446Q2853 439.5 2858.5 436.5H2885.5Q2891.2 439.5 2891.2 446Q2888 455 2872 455Q2856 455 2853 446Z" fill="#CED0D6"/><path d="M2860 437V449.5Q2866 451.5 2872 451.5Q2878 451.5 2884 449.5V437Z" fill="#27282A"/><rect x="2865.6" y="440.4" width="4" height="7.4" rx="2" fill="#CED0D6"/><rect x="2874.2" y="440.4" width="4" height="7.4" rx="2" fill="#CED0D6"/><g fill="#27282A" stroke="#CED0D6" stroke-width="3"><rect x="2858.3" y="422.9" width="12.4" height="13.5" rx="5.5"/><rect x="2873.3" y="422.9" width="12.4" height="13.5" rx="5.5"/></g></g>
<g transform="translate(0 80)"><path d="M2853 446Q2853 439.5 2858.5 436.5H2885.5Q2891.2 439.5 2891.2 446Q2888 455 2872 455Q2856 455 2853 446Z" fill="#CED0D6"/><path d="M2860 437V449.5Q2866 451.5 2872 451.5Q2878 451.5 2884 449.5V437Z" fill="#27282A"/><rect x="2865.6" y="440.4" width="4" height="7.4" rx="2" fill="#CED0D6"/><g fill="#27282A" stroke="#CED0D6" stroke-width="3"><rect x="2858.3" y="422.9" width="12.4" height="13.5" rx="5.5"/><rect x="2873.3" y="422.9" width="12.4" height="13.5" rx="5.5"/></g><path d="M2871 436.5H2893V456H2871Z" fill="#27282A"/><path d="M2875.5 437.7H2888.7Q2891.2 437.7 2891.2 440.2V449.9Q2891.2 452.4 2888.7 452.4H2884L2886.5 456.7L2881 452.4H2875.5Q2873 452.4 2873 449.9V440.2Q2873 437.7 2875.5 437.7Z" fill="#CED0D6"/><path d="M2853 446Q2856 455 2872 455" fill="none"/></g>
<path transform="translate(2872.35 598.8) scale(1.39 1.22) translate(-2869 -597.75)" d="M2857 607L2861 589M2860.2 593C2862 590 2864.5 588.5 2867 588.5C2870 588.5 2871.3 590.3 2870.7 593.3L2867.9 607M2870.6 593.5C2872.4 590.3 2874.8 588.5 2877.4 588.5C2880.4 588.5 2881.7 590.3 2881.1 593.3L2878.3 607" fill="none" stroke="#CED0D6" stroke-width="2.5" stroke-linecap="round"/>
<rect x="141" y="2038.5" width="14" height="14" rx="3" fill="#1E2A45" stroke="#548AF7" stroke-width="2.4"/>
<path d="M378 2038.5L384.5 2045L378 2051.5" class="chev" style="stroke:#A6A9AF"/>
<path d="M463.6 2038.5L470.1 2045L463.6 2051.5" class="chev" style="stroke:#A6A9AF"/>
<path d="M572.6 2038.5L579.1 2045L572.6 2051.5" class="chev" style="stroke:#A6A9AF"/>
<path d="M670 2038.5L676.5 2045L670 2051.5" class="chev" style="stroke:#A6A9AF"/>
<path d="M760 2038.5L766.5 2045L760 2051.5" class="chev" style="stroke:#A6A9AF"/>
<path d="M791 2035Q791 2033 793 2033H800L803.5 2036.5H814Q816 2036.5 816 2038.5V2055Q816 2057 814 2057H793Q791 2057 791 2055Z" fill="none" stroke="#A6A9AF" stroke-width="2.2" stroke-linejoin="round"/><circle cx="799.5" cy="2047.5" r="2.8" fill="none" stroke="#A6A9AF" stroke-width="2"/>
<defs><linearGradient id="vg" x1="0" y1="0" x2="1" y2="0.25"><stop offset="0" stop-color="#3CCF6A"/><stop offset="0.45" stop-color="#17B4B0"/><stop offset="1" stop-color="#2F7CF6"/></linearGradient></defs><path d="M2320 2033.5H2328L2331.5 2051L2339 2033.5H2347L2333 2059H2326Z" fill="url(#vg)"/>
<path d="M2659.0 2045.5L2664.5 2045.5" stroke="#6F737A" stroke-opacity="0.35" stroke-width="3" stroke-linecap="round"/>
<path d="M2656.9 2050.4L2660.8 2054.3" stroke="#6F737A" stroke-opacity="0.43" stroke-width="3" stroke-linecap="round"/>
<path d="M2652.0 2052.5L2652.0 2058.0" stroke="#6F737A" stroke-opacity="0.51" stroke-width="3" stroke-linecap="round"/>
<path d="M2647.1 2050.4L2643.2 2054.3" stroke="#6F737A" stroke-opacity="0.59" stroke-width="3" stroke-linecap="round"/>
<path d="M2645.0 2045.5L2639.5 2045.5" stroke="#6F737A" stroke-opacity="0.67" stroke-width="3" stroke-linecap="round"/>
<path d="M2647.1 2040.6L2643.2 2036.7" stroke="#6F737A" stroke-opacity="0.75" stroke-width="3" stroke-linecap="round"/>
<path d="M2652.0 2038.5L2652.0 2033.0" stroke="#6F737A" stroke-opacity="0.83" stroke-width="3" stroke-linecap="round"/>
<path d="M2656.9 2040.6L2660.8 2036.7" stroke="#6F737A" stroke-opacity="0.91" stroke-width="3" stroke-linecap="round"/>
<g fill="none" stroke="#CED0D6" stroke-width="2.4"><rect x="2850" y="2044" width="18" height="14" rx="2.5"/><path d="M2865 2044V2040Q2865 2034 2870.5 2034Q2876 2034 2876 2040V2043"/><path d="M2859 2048V2053"/></g>
</svg>
</div>
<div class="a" style="left:112px;top:76px;width:2800px;height:2000px;box-sizing:border-box;border:2px solid rgba(120,122,126,0.62);border-radius:21px;"></div>
</body></html>
